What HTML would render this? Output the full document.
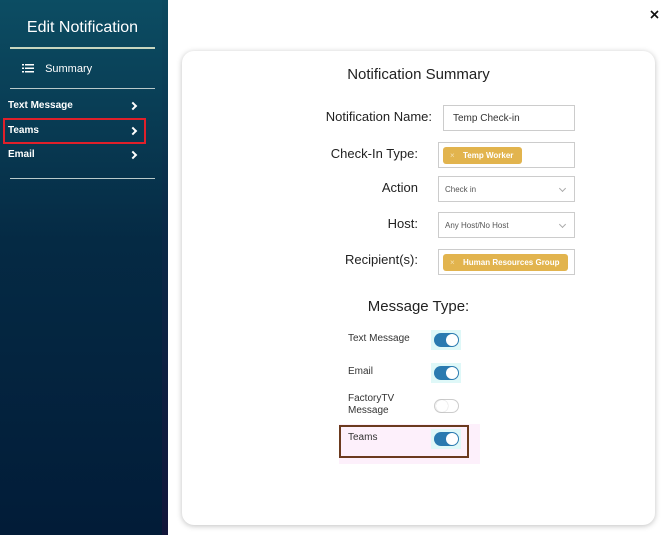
<!DOCTYPE html>
<html><head><style>
*{box-sizing:border-box;margin:0;padding:0}
body{width:670px;height:535px;overflow:hidden;background:#fff;font-family:"Liberation Sans",sans-serif;position:relative}
.sb{position:absolute;left:0;top:0;width:168px;height:535px;background:linear-gradient(#0c4d63,#052a44 45%,#021c38);}
.sb .edge{position:absolute;right:0;top:0;width:6px;height:535px;background:linear-gradient(#0c4a60,#0a2a48 40%,#12163a)}
.t{position:absolute;color:#fff}
.it{font-weight:bold;font-size:10px}
.line{position:absolute;left:10px;width:145px;height:1px;background:#b9c9c9}
.chev{position:absolute;left:130px;width:6px;height:6px;border-right:2px solid #fff;border-top:2px solid #fff;transform:rotate(45deg)}
.card{position:absolute;left:182px;top:51px;width:473px;height:474px;background:#fff;border-radius:12px;box-shadow:0 1px 6px rgba(0,0,0,.25)}
.lbl{position:absolute;font-size:13px;color:#222;text-align:right;width:200px}
.box{position:absolute;left:438px;width:137px;height:26px;border:1px solid #ccc;background:#fff}
.tag{position:absolute;left:4px;top:4px;height:17px;background:#e2b44e;border-radius:3px;color:#fff;font-size:8px;font-weight:bold;line-height:17px;padding:0 9px 0 20px}
.tag:before{content:"×";position:absolute;left:7px;font-weight:normal;color:#f5e0b0}
.sel{font-size:8px;color:#555;line-height:26px;padding-left:6px}
.sel:after{content:"";position:absolute;right:9px;top:9px;width:4px;height:4px;border-right:1px solid #aaa;border-bottom:1px solid #aaa;transform:rotate(45deg)}
.mt{position:absolute;left:348px;font-size:10px;color:#333;line-height:12px}
.tg{position:absolute;left:434px;width:25px;height:14px;border-radius:7px;background:#2a7ab0}
.tg:after{content:"";position:absolute;right:1px;top:1px;width:12px;height:12px;border-radius:50%;background:#fff}
.tg.off{background:#fff;border:1px solid #ccc}
.tg.off:after{left:1px;top:0;background:#fff;box-shadow:0 0 1px #aaa}
.hl{position:absolute;left:431px;width:30px;height:20px;background:#dff8f8}
</style></head><body>
<div class="sb"><div class="edge"></div>
<div class="t" style="left:0;width:165px;text-align:center;top:19px;font-size:16px">Edit Notification</div>
<div class="line" style="top:47px;height:2px;background:#c7d6c0"></div>
<div class="t" style="left:22px;top:63px;font-size:11px;line-height:12px">
<svg width="12" height="10" style="vertical-align:-1px"><rect x="0" y="1" width="2" height="1.5" fill="#fff"/><rect x="3" y="1" width="9" height="1.5" fill="#fff"/><rect x="0" y="4.5" width="2" height="1.5" fill="#fff"/><rect x="3" y="4.5" width="9" height="1.5" fill="#fff"/><rect x="0" y="8" width="2" height="1.5" fill="#fff"/><rect x="3" y="8" width="9" height="1.5" fill="#fff"/></svg>
<span style="margin-left:8px">Summary</span></div>
<div class="line" style="top:88px"></div>
<div class="t it" style="left:8px;top:100px">Text Message</div><div class="chev" style="top:103px"></div>
<div class="t it" style="left:8px;top:125px">Teams</div><div class="chev" style="top:128px"></div>
<div style="position:absolute;left:3px;top:118px;width:143px;height:26px;border:2px solid #e0202a"></div>
<div class="t it" style="left:8px;top:149px">Email</div><div class="chev" style="top:152px"></div>
<div class="line" style="top:178px"></div>
</div>
<svg style="position:absolute;left:650px;top:10px" width="9" height="9"><path d="M1 1L8 8M8 1L1 8" stroke="#111" stroke-width="1.6"/></svg>
<div class="card"></div>
<div style="position:absolute;left:182px;width:473px;top:66px;text-align:center;font-size:15px;color:#222">Notification Summary</div>
<div class="lbl" style="left:232px;top:109px">Notification Name:</div>
<div class="box" style="top:105px;left:443px;width:132px;font-size:10px;color:#333;line-height:26px;padding-left:9px">Temp Check-in</div>
<div class="lbl" style="left:218px;top:146px">Check-In Type:</div>
<div class="box" style="top:142px"><div class="tag">Temp Worker</div></div>
<div class="lbl" style="left:218px;top:180px">Action</div>
<div class="box sel" style="top:176px">Check in</div>
<div class="lbl" style="left:218px;top:216px">Host:</div>
<div class="box sel" style="top:212px">Any Host/No Host</div>
<div class="lbl" style="left:218px;top:252px">Recipient(s):</div>
<div class="box" style="top:249px"><div class="tag">Human Resources Group</div></div>
<div style="position:absolute;left:182px;width:473px;top:298px;text-align:center;font-size:15px;color:#222">Message Type:</div>
<div style="position:absolute;left:339px;top:424px;width:141px;height:40px;background:#fdf0fb"></div>
<div class="mt" style="top:333px">Text Message</div><div class="hl" style="top:330px"></div><div class="tg" style="top:333px"></div>
<div class="mt" style="top:366px">Email</div><div class="hl" style="top:363px"></div><div class="tg" style="top:366px"></div>
<div class="mt" style="top:393px">FactoryTV<br>Message</div><div class="tg off" style="top:399px"></div>
<div style="position:absolute;left:339px;top:425px;width:130px;height:33px;border:2px solid #6b3a1e"></div>
<div class="mt" style="top:432px">Teams</div><div class="hl" style="top:429px"></div><div class="tg" style="top:432px"></div>
</body></html>
